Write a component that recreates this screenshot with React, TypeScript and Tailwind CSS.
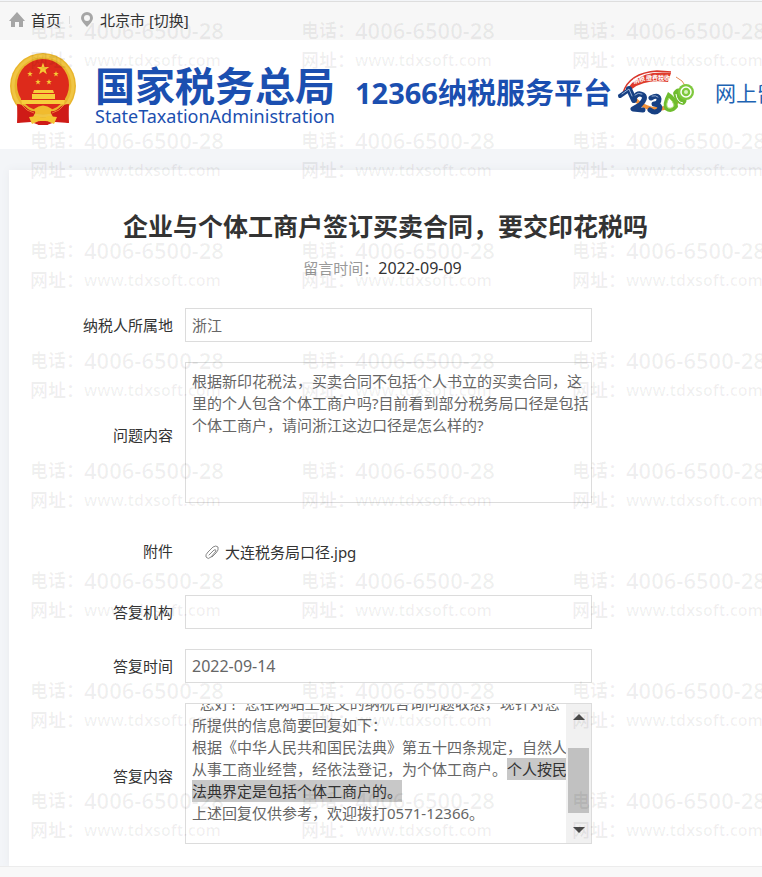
import type { ReactNode } from "react";

const WATERMARKS = Array.from({ length: 24 }, (_, i) => i);

const star = (cx: number, cy: number, r: number) =>
  Array.from({ length: 10 }, (_, i) => {
    const radius = i % 2 === 0 ? r : r * 0.4;
    const angle = -Math.PI / 2 + (i * Math.PI) / 5;
    return `${(cx + radius * Math.cos(angle)).toFixed(2)},${(cy + radius * Math.sin(angle)).toFixed(2)}`;
  }).join(" ");

function Emblem() {
  return (
    <svg viewBox="0 0 68 74" className="mb-2 h-[74px] w-[68px] shrink-0" role="img" aria-label="国徽">
      <path d="M9 50 L8 71 L22 70 L30 73 H38 L46 70 L60 71 L59 50 Z" fill="#cf1b17" />
      <circle cx="34" cy="34" r="33" fill="#e9b52c" />
      <circle cx="34" cy="34" r="30" fill="none" stroke="#f0c544" strokeWidth="3" />
      <circle cx="34" cy="33" r="26" fill="#dd2a1b" />
      <polygon points={star(34, 17, 6.5)} fill="#f5c935" />
      <polygon points={star(21, 22, 3)} fill="#f5c935" />
      <polygon points={star(47, 22, 3)} fill="#f5c935" />
      <polygon points={star(29, 30, 3)} fill="#f5c935" />
      <polygon points={star(40, 30, 3)} fill="#f5c935" />
      <path d="M25 38 H44 L45 41 H24 Z M23 42 H46 V47 H56 L55 52 H13 L12 47 H23 Z" fill="#f7ce3c" />
      <path d="M12 47.5 H56" stroke="#dd2a1b" strokeWidth="1" />
      <path d="M8 52 Q14 52 19 57 Q23 60 27 59 L24 65 L9 71 Z M60 52 Q54 52 49 57 Q45 60 41 59 L44 65 L59 71 Z" fill="#cf1b17" />
      <path d="M13 53 Q17 59 25 61 M55 53 Q51 59 43 61" stroke="#ef7a35" strokeWidth="1" fill="none" />
      <path d="M25 57 Q34 50 43 57 L41 62 H27 Z" fill="#f1bb2e" />
      <path d="M20 65 L29 64 Q34 68 39 64 L48 65 L45 72 L38 69 Q34 71 30 69 L23 72 Z" fill="#f4c534" />
      <path d="M31 69 H37 L39 73 H29 Z" fill="#cf1b17" />
    </svg>
  );
}

function HotlineLogo() {
  return (
    <svg viewBox="0 0 78 48" className="h-[48px] w-[78px] shrink-0" role="img" aria-label="12300">
      <path d="M6 24 Q12 4 40 2 L54 3" fill="none" stroke="#d9362a" strokeWidth="1.5" />
      <path d="M10 20 Q20 6 36 4 Q46 3 54 4 L51 13 Q28 10 15 20 Z" fill="#de3a2b" />
      <text x="17" y="15" transform="rotate(-18 17 15)" fontSize="6" fill="#fff" className="font-['Noto_Sans_CJK_SC',sans-serif] font-bold">纳税</text>
      <text x="29" y="11" fontSize="6" fill="#fff" className="font-['Noto_Sans_CJK_SC',sans-serif] font-bold">缴费税收</text>
      <path d="M13 22 Q20 38 38 40 Q60 40 68 22" fill="none" stroke="#f0913a" strokeWidth="4" />
      <path d="M59 8 Q66 11 69 18" fill="none" stroke="#e58a55" strokeWidth="1" />
      <g strokeLinecap="round" strokeLinejoin="round" fill="none" stroke="#174083">
        <path d="M3 27 L13 20" strokeWidth="4" />
        <path d="M12 20 L17 31" strokeWidth="6" />
        <path d="M18 28 Q21 23 26 26 Q30 29 23 36 L16 40 L26 41" strokeWidth="5" />
        <path d="M34 29 Q41 25 42 30 Q42 35 37 35 Q45 36 42 41 Q38 45 33 41" strokeWidth="5" />
        <path d="M5 25 L12 20 L15 27" stroke="#b9cbe6" strokeWidth="0.8" />
        <path d="M18 26 Q21 23 25 25" stroke="#b9cbe6" strokeWidth="0.8" />
        <path d="M35 27 Q39 26 41 28" stroke="#b9cbe6" strokeWidth="0.8" />
      </g>
      <path d="M51 23 Q44 36 48 41 Q55 46 61 38 Q61 29 51 23 Z" fill="#6fbd2f" />
      <path d="M52 29 Q48 36 51 39 Q56 40 57 36 Q56 32 52 29 Z" fill="#fff" stroke="#a7dc68" />
      <path d="M56 24 Q60 16 66 22 Q73 33 66 36 Q58 35 56 24 Z" fill="#6fbd2f" />
      <path d="M59 25 Q60 33 66 34" stroke="#fff" strokeWidth="1" fill="none" />
      <circle cx="69" cy="23" r="8" fill="#7fc83e" />
      <circle cx="69" cy="23" r="5" fill="none" stroke="#fff" strokeWidth="1.5" />
      <circle cx="69" cy="23" r="2" fill="#d9f2bd" />
    </svg>
  );
}

function Row({ label, id, tall, children }: { label: string; id: string; tall?: boolean; children: ReactNode }) {
  return (
    <div className="grid grid-cols-[164px_minmax(0,407px)] items-center gap-x-3">
      <label id={`${id}-label`} htmlFor={id} className={tall ? "pt-1 text-right" : "text-right"}>
        {label}
      </label>
      {children}
    </div>
  );
}

const FIELD = "block w-full rounded-none border border-[#dcdcdc] bg-white text-[#666] outline-none";

export default function App() {
  return (
    <div className="relative flex min-h-screen flex-col overflow-hidden bg-[#f3f5f8] font-['Noto_Sans','Noto_Sans_CJK_SC',sans-serif] text-[15px] leading-[22px] text-[#333]">
      <nav className="mt-px flex h-[39px] items-center border-t border-[#dedede] bg-[#f7f7f7] pb-0.5 pl-2 whitespace-nowrap">
        <svg viewBox="0 0 18 18" className="mr-[5px] size-[18px]" fill="#a6a6a6" aria-hidden="true">
          <path d="M9 1 L17 10 H15 V16 H11 V11 H7 V16 H3 V10 H1 Z" />
        </svg>
        <a href="#home">首页</a>
        <span className="mr-[10px] ml-2 h-2 w-px bg-[#ddd]" />
        <svg viewBox="0 0 14 18" className="mr-1.5 h-[18px] w-[14px]" fill="#a6a6a6" aria-hidden="true">
          <path fillRule="evenodd" d="M7 1 A6 6 0 0 1 13 7 Q13 10 7 16 Q1 10 1 7 A6 6 0 0 1 7 1 Z M7 4 A3 3 0 1 0 7 10 A3 3 0 1 0 7 4 Z" />
        </svg>
        <span>北京市&nbsp;</span>
        <button type="button">[切换]</button>
      </nav>

      <header className="flex h-[109px] items-center bg-white pb-1 pl-[9px] whitespace-nowrap">
        <Emblem />
        <div className="mt-1.5 ml-[18px] shrink-0 text-[#1b4fb0]">
          <p className="text-[40px] leading-[40px] font-bold">国家税务总局</p>
          <p className="text-[18px] leading-5">StateTaxationAdministration</p>
        </div>
        <p className="ml-5 text-[29px] leading-10 font-bold text-[#1b4fb0]">12366纳税服务平台</p>
        <div className="ml-[5px]">
          <HotlineLogo />
        </div>
        <a href="#message" className="ml-5 text-[21px] leading-8 text-[#1d63b3]">
          网上留言
        </a>
      </header>

      <main className="mt-[21px] ml-[9px] bg-white pt-[39px] pb-[22px] shadow-[0_0_8px_#e9ebee]">
        <h1 className="text-center text-[25px] leading-[34px] font-bold">企业与个体工商户签订买卖合同，要交印花税吗</h1>
        <p className="mt-[13px] pr-1.5 text-center leading-6">
          <span className="text-[#999]">留言时间：</span>
          <time dateTime="2022-09-09" className="text-base leading-6">2022-09-09</time>
        </p>

        <form className="mt-7 flex flex-col gap-5">
          <Row label="纳税人所属地" id="region">
            <input id="region" readOnly value="浙江" className={`${FIELD} h-[34px] px-1.5 pb-0.5`} />
          </Row>
          <Row label="问题内容" id="question" tall>
            <textarea
              id="question"
              readOnly
              className={`${FIELD} h-[141px] resize-none overflow-hidden py-[7px] pl-1.5`}
              value={
                "根据新印花税法，买卖合同不包括个人书立的买卖合同，这\n里的个人包含个体工商户吗?目前看到部分税务局口径是包括\n个体工商户，请问浙江这边口径是怎么样的?"
              }
            />
          </Row>
          <Row label="附件" id="attachment" tall>
            <div className="flex h-[52px] items-center pt-1.5 pl-5">
              <svg viewBox="0 0 14 16" className="mr-1.5 h-4 w-[14px]" fill="none" stroke="#888" strokeLinecap="round" aria-hidden="true">
                <path d="M4 11 L9 6 Q11 5 11 7 L6 13 Q3 16 1 13 Q0 11 3 8 L8 3 Q11 1 13 3 Q14 6 11 9 L7 13" />
              </svg>
              <a id="attachment" href="#attachment">
                大连税务局口径.jpg
              </a>
            </div>
          </Row>
          <Row label="答复机构" id="agency">
            <input id="agency" readOnly value="" className={`${FIELD} h-[34px] px-1.5`} />
          </Row>
          <Row label="答复时间" id="reply-time">
            <input id="reply-time" readOnly value="2022-09-14" className={`${FIELD} h-[34px] px-1.5 text-base`} />
          </Row>
          <Row label="答复内容" id="reply" tall>
            <div
              id="reply"
              role="textbox"
              aria-readonly="true"
              aria-labelledby="reply-label"
              className={`${FIELD} flex h-[141px] overflow-hidden`}
            >
              <div className="-mt-3 min-w-0 flex-1 pl-1.5 whitespace-nowrap">
                <p>&nbsp;&nbsp;您好！您在网站上提交的纳税咨询问题收悉，现针对您</p>
                <p>所提供的信息简要回复如下：</p>
                <p>根据《中华人民共和国民法典》第五十四条规定，自然人</p>
                <p>
                  从事工商业经营，经依法登记，为个体工商户。
                  <mark className="inline-block bg-[#c8c8c8] text-[#333]">个人按民</mark>
                </p>
                <p>
                  <mark className="inline-block bg-[#c8c8c8] text-[#333]">法典界定是包括个体工商户的。</mark>
                </p>
                <p>上述回复仅供参考，欢迎拨打0571-12366。</p>
              </div>
              <div className="flex w-[25px] shrink-0 flex-col items-center bg-[#f1f1f1] pt-[10px] pb-[10px]">
                <svg viewBox="0 0 12 6" className="h-1.5 w-3" fill="#4d4d4d" aria-hidden="true">
                  <path d="M0 6 L6 0 L12 6 Z" />
                </svg>
                <div className="mt-7 h-[65px] w-[21px] bg-[#c1c1c1]" />
                <svg viewBox="0 0 12 6" className="mt-auto h-1.5 w-3" fill="#4d4d4d" aria-hidden="true">
                  <path d="M0 0 L6 6 L12 0 Z" />
                </svg>
              </div>
            </div>
          </Row>
        </form>
      </main>

      <footer className="min-h-[11px] flex-1 border-t border-[#ececec] bg-[#f8f8f8]" />

      <div
        aria-hidden="true"
        className="pointer-events-none absolute inset-0 grid grid-cols-[repeat(3,271px)] content-start overflow-hidden pt-[15px] pl-[30px] whitespace-nowrap text-black/6"
      >
        {WATERMARKS.map((n) => (
          <div key={n} className="h-[110px] font-['Noto_Sans','Noto_Sans_CJK_SC',sans-serif] leading-[30px]">
            <p className="flex items-center font-semibold">
              <span className="text-[18px] font-bold">电话：</span>
              <span className="text-[22px]">4006-6500-28</span>
            </p>
            <p className="flex items-center font-semibold">
              <span className="text-[18px] font-bold">网址：</span>
              <span className="text-[16px]">www.tdxsoft.com</span>
            </p>
          </div>
        ))}
      </div>
    </div>
  );
}
